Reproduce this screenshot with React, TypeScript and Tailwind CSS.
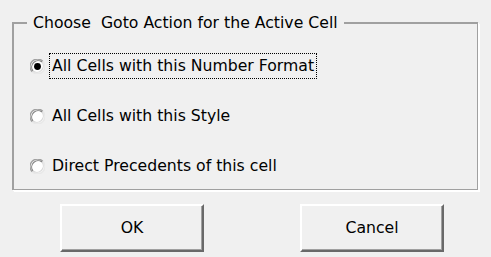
import React, { useState } from 'react';

const options = [
  'All Cells with this Number Format',
  'All Cells with this Style',
  'Direct Precedents of this cell',
];

const Radio = ({ checked }: { checked: boolean }) => (
  <svg width="15" height="15" viewBox="0 0 14 14" className="shrink-0">
    <circle cx="7" cy="7" r="6" fill="#fff" />
    <path d="M2.05 11.95 A7 7 0 0 1 11.95 2.05" fill="none" stroke="#a0a0a0" strokeWidth="1.2" />
    <path d="M11.95 2.05 A7 7 0 0 1 2.05 11.95" fill="none" stroke="#e8e8e8" strokeWidth="1.2" />
    <path d="M2.8 11.2 A6 6 0 0 1 11.2 2.8" fill="none" stroke="#7a7a7a" strokeWidth="1" />
    <path d="M11.2 2.8 A6 6 0 0 1 2.8 11.2" fill="none" stroke="#d8d8d8" strokeWidth="1" />
    {checked && <circle cx="7" cy="7" r="3.2" fill="#000" />}
  </svg>
);

const Button = ({ label }: { label: string }) => (
  <button className="w-[144px] h-[48px] bg-[#f0f0f0] border-t-2 border-l-2 border-t-white border-l-white border-r-2 border-b-2 border-r-[#696969] border-b-[#696969] shadow-[inset_-1px_-1px_0_#a0a0a0] text-[15.7px] text-black">
    {label}
  </button>
);

export default function App() {
  const [selected, setSelected] = useState(0);

  return (
    <div className="w-[491px] h-[257px] bg-[#f0f0f0] pt-[22px] pl-[12px] font-['DejaVu_Sans',Tahoma,sans-serif] text-[15.7px] text-black overflow-hidden">
      <div className="relative w-[466px] h-[168px] border-t-2 border-l-2 border-r border-b border-[#a0a0a0] shadow-[1px_1px_0_#fff,2px_2px_0_#fff] pt-[29px] pl-[16px]">
        <span className="absolute top-[-13px] left-[13px] px-[6px] bg-[#f0f0f0] leading-[24px] whitespace-pre">
          Choose  Goto Action for the Active Cell
        </span>
        <div className="flex flex-col gap-[24px]">
          {options.map((opt, i) => (
            <div key={opt} className="flex items-center h-[26px] cursor-default" onClick={() => setSelected(i)}>
              <Radio checked={selected === i} />
              <span
                className={
                  selected === i
                    ? 'ml-[4px] px-[2px] leading-[24px] border border-dotted border-black'
                    : 'ml-[4px] px-[2px] leading-[24px] border border-transparent'
                }
              >
                {opt}
              </span>
            </div>
          ))}
        </div>
      </div>
      <div className="flex mt-[14px] ml-[48px] gap-[96px]">
        <Button label="OK" />
        <Button label="Cancel" />
      </div>
    </div>
  );
}
